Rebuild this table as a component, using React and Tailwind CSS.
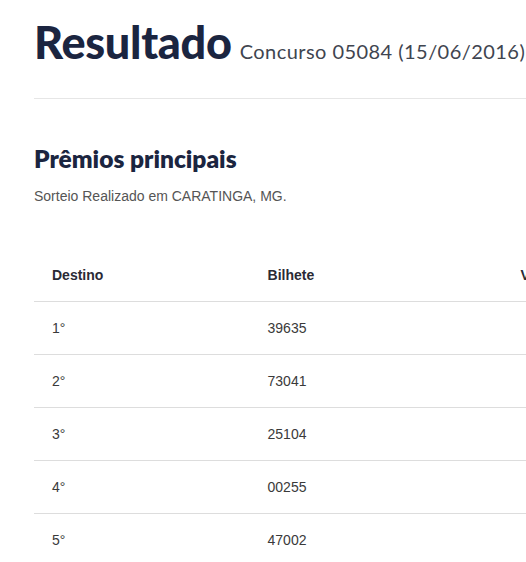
export default function App() {
  const rows = [
    ["1°", "39635"],
    ["2°", "73041"],
    ["3°", "25104"],
    ["4°", "00255"],
    ["5°", "47002"],
  ];
  return (
    <div className="w-[526px] h-[562px] overflow-hidden bg-white">
      <div className="w-[700px] pl-[34px]">
        <div className="flex items-baseline pt-[13px] h-[98px]">
          <h1 className="font-['Lato',sans-serif] font-black text-[45px] leading-[58px] text-[#1b2540] tracking-[-0.3px]">
            Resultado
          </h1>
          <span className="ml-[8px] font-['Lato',sans-serif] text-[20px] text-[#3f4550] tracking-[0.45px]">
            Concurso 05084 (15/06/2016)
          </span>
        </div>
        <div className="border-t border-[#e6e6e6]" />
        <h2 className="mt-[46px] font-['Lato',sans-serif] font-extrabold text-[24.5px] leading-[28px] text-[#1b2540]">
          Prêmios principais
        </h2>
        <p className="mt-[14px] font-['Liberation_Sans',sans-serif] text-[14px] leading-[18px] text-[#555]">
          Sorteio Realizado em CARATINGA, MG.
        </p>
        <table className="mt-[44px] border-collapse font-['Liberation_Sans',sans-serif] text-[14px]">
          <thead>
            <tr className="border-b border-[#dddddd]">
              <th className="w-[218px] h-[52px] pl-[18px] pt-[2px] text-left font-bold text-[#2a2a35]">Destino</th>
              <th className="w-[256px] h-[52px] pl-[18px] pt-[2px] text-left font-bold text-[#2a2a35]">Bilhete</th>
              <th className="w-[200px] h-[52px] pl-[18px] pt-[2px] text-left font-bold text-[#2a2a35]">Valor (R$)</th>
            </tr>
          </thead>
          <tbody>
            {rows.map(([d, b], i) => (
              <tr key={i} className={i < rows.length - 1 ? "border-b border-[#dddddd]" : ""}>
                <td className="h-[53px] pl-[18px] pt-[2px] text-[#3a3a3a]">{d}</td>
                <td className="h-[53px] pl-[18px] pt-[2px] text-[#3a3a3a]">{b}</td>
                <td className="h-[53px] pl-[18px] pt-[2px] text-[#3a3a3a]"></td>
              </tr>
            ))}
          </tbody>
        </table>
      </div>
    </div>
  );
}
